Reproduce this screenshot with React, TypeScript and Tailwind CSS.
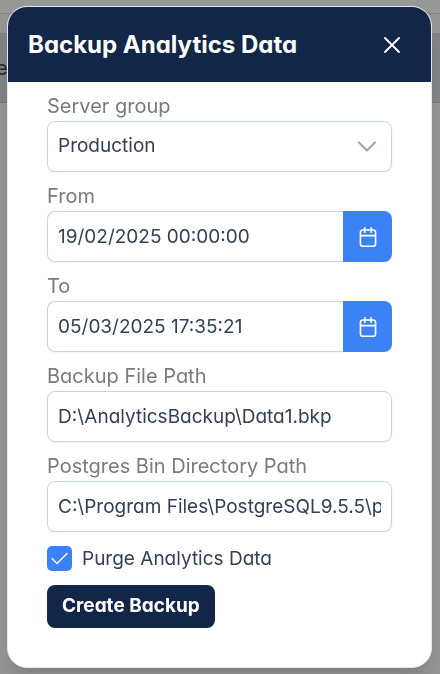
import React from "react";

const fieldClass =
  "h-[51px] w-full min-w-0 rounded-lg border border-[#c8d4e3] bg-white px-2.5 pb-px text-[19px] text-[#334155] shadow-[0_1px_2px_rgba(18,18,23,0.05)] outline-none";

function Field({ id, label, children }: { id: string; label: string; children: React.ReactNode }) {
  return (
    <div className="flex flex-col gap-px">
      <label htmlFor={id} className="text-xl leading-7 text-[#7b7b7b]">
        {label}
      </label>
      {children}
    </div>
  );
}

function CalendarIcon() {
  return (
    <svg viewBox="0 0 14 14" className="size-5" fill="white" aria-hidden="true">
      <path d="M10.7838 1.51351H9.83783V0.567568C9.83783 0.417039 9.77804 0.272676 9.6716 0.166237C9.56516 0.0597971 9.42079 0 9.27027 0C9.11974 0 8.97538 0.0597971 8.86894 0.166237C8.7625 0.272676 8.7027 0.417039 8.7027 0.567568V1.51351H5.29729V0.567568C5.29729 0.417039 5.2375 0.272676 5.13106 0.166237C5.02462 0.0597971 4.88025 0 4.72973 0C4.5792 0 4.43484 0.0597971 4.3284 0.166237C4.22196 0.272676 4.16216 0.417039 4.16216 0.567568V1.51351H3.21621C2.66428 1.51351 2.13494 1.73277 1.74467 2.12305C1.35439 2.51333 1.13513 3.04266 1.13513 3.59459V11.9189C1.13513 12.4709 1.35439 13.0002 1.74467 13.3905C2.13494 13.7807 2.66428 14 3.21621 14H10.7838C11.3357 14 11.865 13.7807 12.2553 13.3905C12.6456 13.0002 12.8649 12.4709 12.8649 11.9189V3.59459C12.8649 3.04266 12.6456 2.51333 12.2553 2.12305C11.865 1.73277 11.3357 1.51351 10.7838 1.51351ZM3.21621 2.64865H4.16216V3.59459C4.16216 3.74512 4.22196 3.88949 4.3284 3.99593C4.43484 4.10237 4.5792 4.16216 4.72973 4.16216C4.88025 4.16216 5.02462 4.10237 5.13106 3.99593C5.2375 3.88949 5.29729 3.74512 5.29729 3.59459V2.64865H8.7027V3.59459C8.7027 3.74512 8.7625 3.88949 8.86894 3.99593C8.97538 4.10237 9.11974 4.16216 9.27027 4.16216C9.42079 4.16216 9.56516 4.10237 9.6716 3.99593C9.77804 3.88949 9.83783 3.74512 9.83783 3.59459V2.64865H10.7838C11.0347 2.64865 11.2753 2.74831 11.4527 2.92571C11.6301 3.10311 11.7297 3.34371 11.7297 3.59459V5.48649H2.27027V3.59459C2.27027 3.34371 2.36993 3.10311 2.54733 2.92571C2.72473 2.74831 2.96533 2.64865 3.21621 2.64865ZM10.7838 12.8649H3.21621C2.96533 12.8649 2.72473 12.7652 2.54733 12.5878C2.36993 12.4104 2.27027 12.1698 2.27027 11.9189V6.62162H11.7297V11.9189C11.7297 12.1698 11.6301 12.4104 11.4527 12.5878C11.2753 12.7652 11.0347 12.8649 10.7838 12.8649Z" />
    </svg>
  );
}

function DateField({ id, label, value }: { id: string; label: string; value: string }) {
  return (
    <Field id={id} label={label}>
      <div className="flex">
        <input id={id} type="text" defaultValue={value} className={`${fieldClass} flex-1 rounded-r-none border-r-0`} />
        <button
          type="button"
          aria-label={`Choose ${label} date`}
          className="flex w-[49px] shrink-0 items-center justify-center rounded-r-lg bg-[#3b82f6]"
        >
          <CalendarIcon />
        </button>
      </div>
    </Field>
  );
}

export default function App() {
  return (
    <div className="min-h-screen bg-[#959595] font-['Inter',sans-serif] [font-feature-settings:'cv11']">
      <div className="h-3.5 border-b border-[#858585] bg-[#989898]" />
      <div className="h-5 border-b border-[#7f7f7f]" />
      <div className="flex h-[69px] items-center border-b border-[#777777] bg-[#828486]">
        <span className="-ml-1 text-xl text-[#22262b]">e</span>
      </div>

      <div className="fixed inset-0 flex items-start pt-1.5 pr-2 pl-[7px]">
        <div
          role="dialog"
          aria-labelledby="title"
          className="w-full overflow-hidden rounded-[20px] border border-[#e2e8f0] bg-white shadow-[0_20px_25px_-5px_rgba(0,0,0,0.1),0_8px_10px_-6px_rgba(0,0,0,0.1)]"
        >
          <header className="flex h-[75px] items-center justify-between bg-[#122648] pr-[29px] pl-5">
            <h1 id="title" className="text-2xl font-bold text-white">
              Backup Analytics Data
            </h1>
            <button type="button" aria-label="Close" className="flex size-5 items-center justify-center">
              <svg viewBox="0 0 16 16" className="size-4" fill="none" stroke="white" strokeWidth="1.8" strokeLinecap="round" aria-hidden="true">
                <path d="M1 1L15 15M15 1L1 15" />
              </svg>
            </button>
          </header>

          <form className="flex flex-col gap-2.5 px-[39px] pt-2.5 pb-[39px]">
            <Field id="group" label="Server group">
              <div className="grid">
                <select id="group" defaultValue="Production" className={`${fieldClass} col-start-1 row-start-1 appearance-none`}>
                  <option>Production</option>
                </select>
                <svg
                  viewBox="0 0 18 11"
                  className="pointer-events-none col-start-1 row-start-1 mr-4 h-[11px] w-[18px] self-center justify-self-end"
                  fill="none"
                  stroke="#94a3b8"
                  strokeWidth="2"
                  strokeLinecap="round"
                  strokeLinejoin="round"
                  aria-hidden="true"
                >
                  <path d="M1 1.5L9 9.5L17 1.5" />
                </svg>
              </div>
            </Field>
            <DateField id="from" label="From" value="19/02/2025 00:00:00" />
            <DateField id="to" label="To" value="05/03/2025 17:35:21" />
            <Field id="file" label="Backup File Path">
              <input id="file" type="text" defaultValue="D:\AnalyticsBackup\Data1.bkp" className={fieldClass} />
            </Field>
            <Field id="bin" label="Postgres Bin Directory Path">
              <input id="bin" type="text" defaultValue="C:\Program Files\PostgreSQL9.5.5\pgsql\bin" className={fieldClass} />
            </Field>
            <div className="mt-1 flex items-center gap-2.5">
              <span className="grid size-[25px]">
                <input id="purge" type="checkbox" defaultChecked className="col-start-1 row-start-1 size-full appearance-none rounded-[5px] bg-[#3b82f6]" />
                <svg
                  viewBox="0 0 17 13"
                  className="pointer-events-none col-start-1 row-start-1 h-[13px] w-[17px] place-self-center"
                  fill="none"
                  stroke="white"
                  strokeWidth="1.4"
                  strokeLinecap="round"
                  strokeLinejoin="round"
                  aria-hidden="true"
                >
                  <path d="M1 6.5L6 11.5L16 1.5" />
                </svg>
              </span>
              <label htmlFor="purge" className="text-[19px] leading-6 text-[#334155]">
                Purge Analytics Data
              </label>
            </div>
            <button type="button" className="mt-1 h-[43px] self-start rounded-lg bg-[#122648] px-[15px] text-[19px] font-bold text-white">
              Create Backup
            </button>
          </form>
        </div>
      </div>
    </div>
  );
}
